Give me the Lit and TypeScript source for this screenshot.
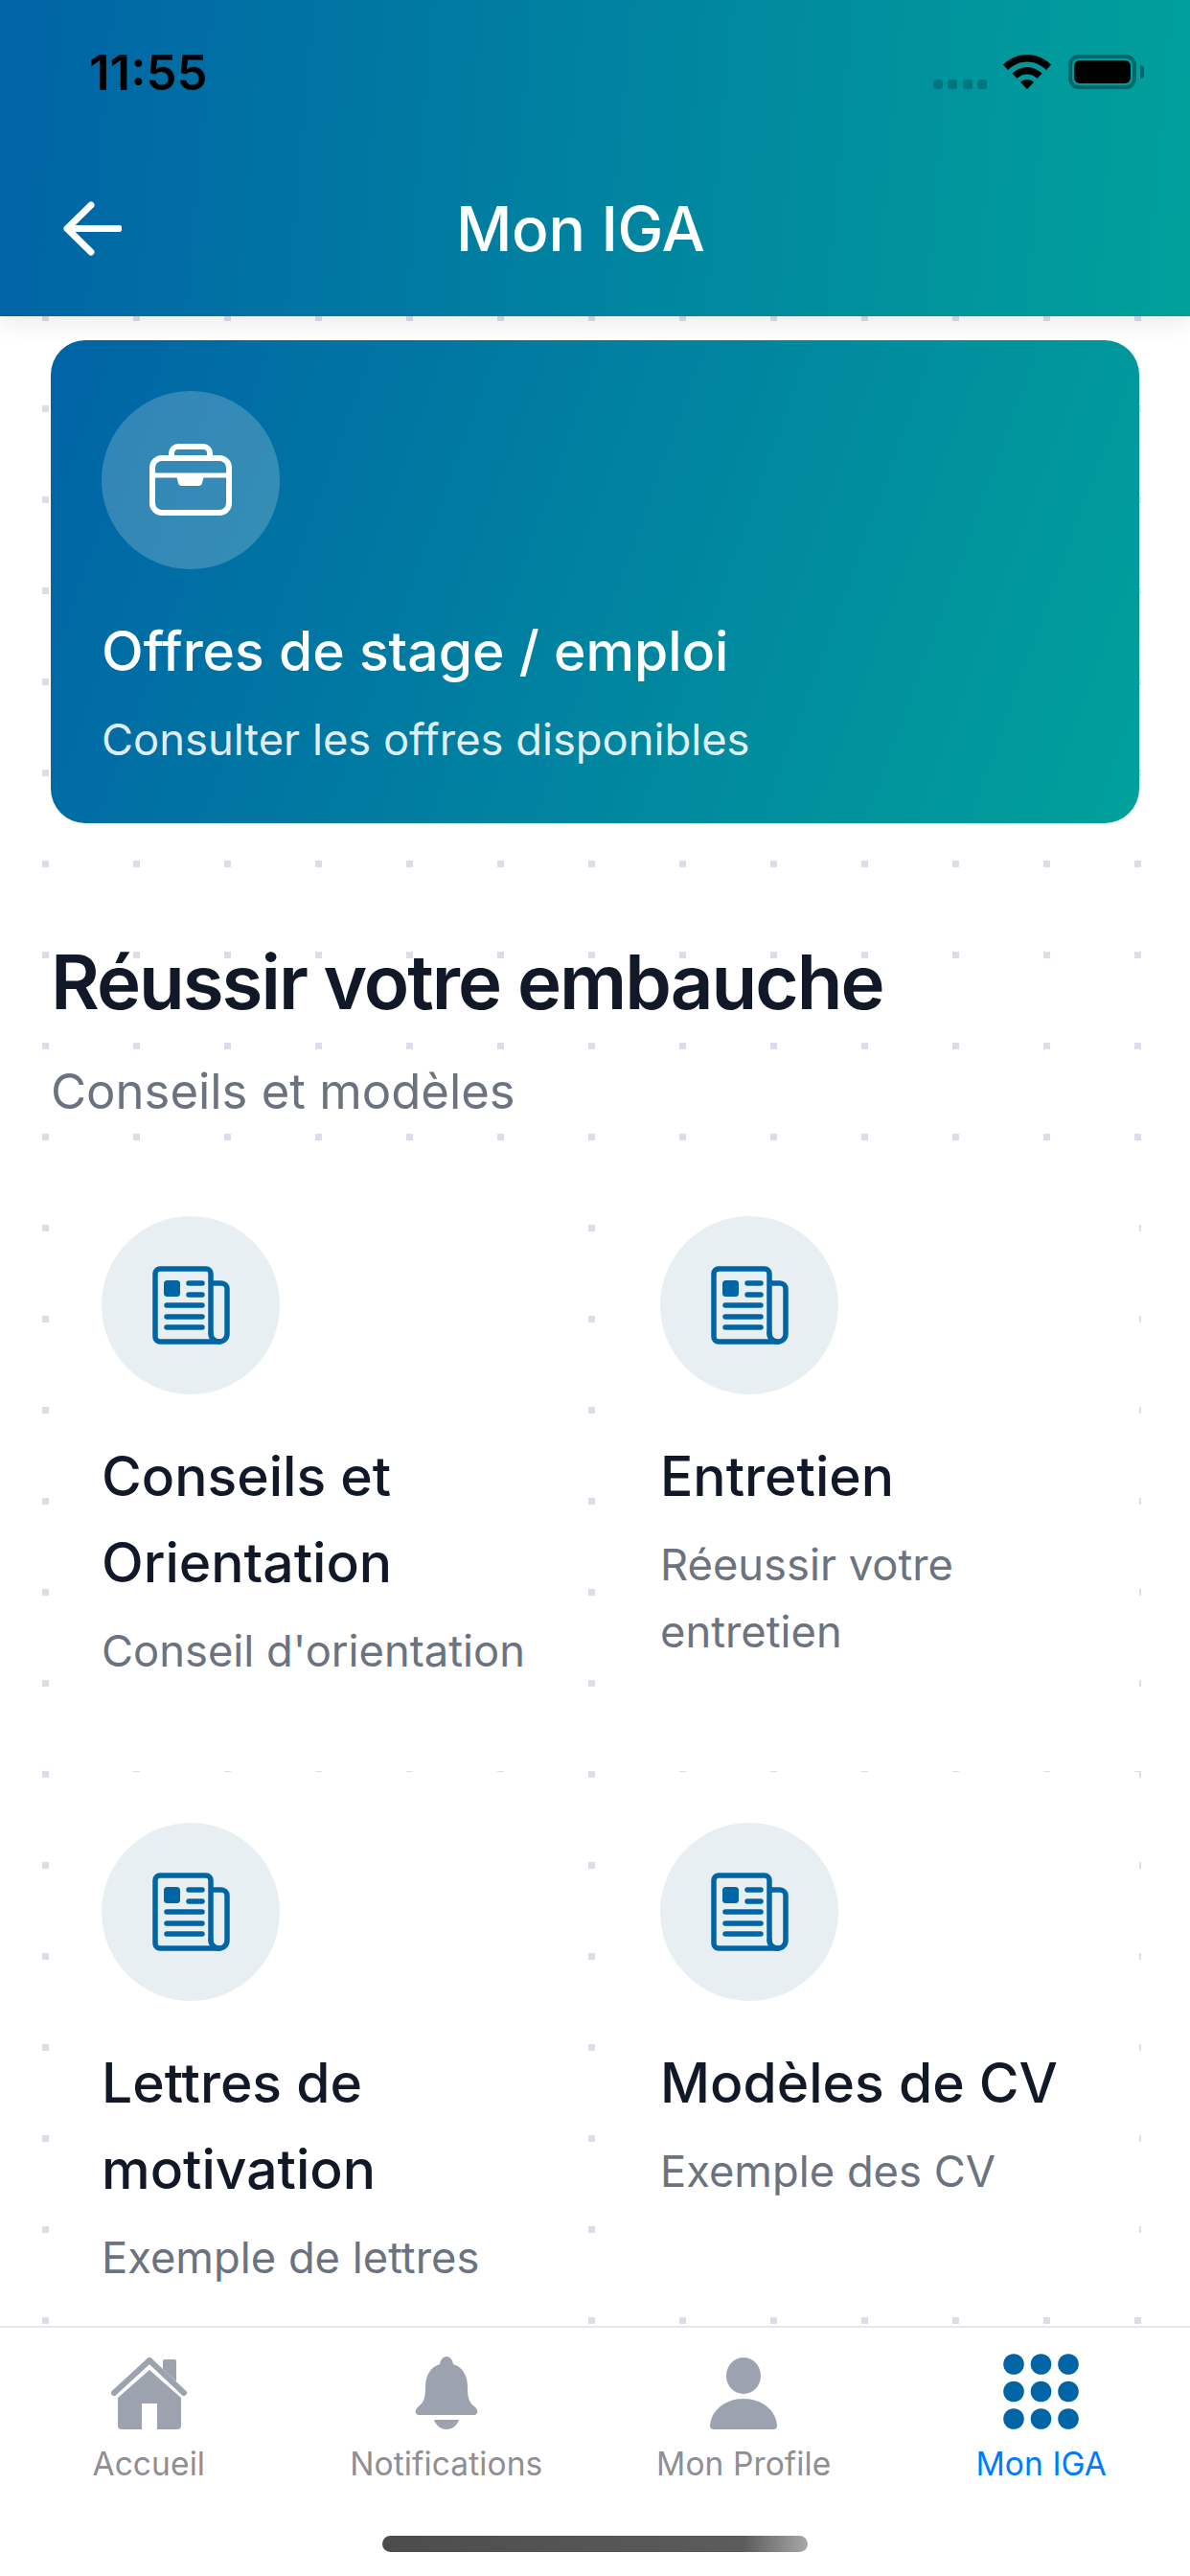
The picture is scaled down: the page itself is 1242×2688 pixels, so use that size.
import { LitElement, html, css, svg } from "lit";
import { customElement } from "lit/decorators.js";

const newspaper = html`<svg class="ico-news" viewBox="0 0 81 82" fill="none" stroke="#0065a5" stroke-width="5.5" stroke-linecap="round" stroke-linejoin="round">
  <path d="M61 70V8a5 5 0 0 0-5-5H8a5 5 0 0 0-5 5v66a5 5 0 0 0 5 5h62a8 8 0 0 0 8-8V24a6 6 0 0 0-6-6H61"/>
  <path d="M61 70a8.5 8.5 0 0 0 9 9"/>
  <rect x="12" y="15" width="17" height="17" rx="3.5" fill="#0065a5" stroke="none"/>
  <path d="M38 18h14M38 30h14M15 41h37M15 53h37M15 64h37"/>
</svg>`;

const briefcase = html`<svg class="ico-case" viewBox="-1 0 100 86" fill="none" stroke="#fff" stroke-width="6" stroke-linejoin="round">
  <rect x="9" y="20" width="80" height="57" rx="10"/>
  <path d="M29 20v-5a7 7 0 0 1 7-7h26a7 7 0 0 1 7 7v5"/>
  <path d="M9 38h80" stroke-width="5"/>
  <path d="M34 38h29l-2 8a4 4 0 0 1-4 3H40a4 4 0 0 1-4-3z" fill="#fff" stroke="none"/>
</svg>`;

const homeIcon = html`<svg class="t-home" viewBox="0 0 81 76" fill="#9ca3af">
  <path d="M4 38 41 4l36 34" fill="none" stroke="#9ca3af" stroke-width="6" stroke-linecap="round" stroke-linejoin="round"/>
  <path d="M55 5a2 2 0 0 1 2-2h10a2 2 0 0 1 2 2v21L55 13z"/>
  <path d="M41 14 74 43v29a4 4 0 0 1-4 4H49V49H33v27H12a4 4 0 0 1-4-4V43z"/>
</svg>`;
const bellIcon = html`<svg class="t-bell" viewBox="0 0 66 76" fill="#9ca3af">
  <path d="M33 0c4 0 6.500 4 7 8 10 3 15 12 15 24 0 12 2 16 7 20 3 2.500 4 5 3 7-.7 1.400-2 2-4 2H5c-2 0-3.300-.6-4-2-1-2 0-4.500 3-7 5-4 7-8 7-20 0-12 5-21 15-24 .5-4 3-8 7-8z"/>
  <path d="M20 66h26c-2 6-7 10-13 10s-11-4-13-10z"/>
</svg>`;
const userIcon = html`<svg class="t-user" viewBox="0 0 70 75" fill="#9ca3af">
  <ellipse cx="35" cy="19" rx="18" ry="19"/>
  <path d="M4 75a4 4 0 0 1-4-4C1 55 16 43 35 43s34 12 35 28a4 4 0 0 1-4 4z"/>
</svg>`;
const gridIcon = html`<svg class="t-grid" viewBox="0 0 79 79" fill="#0065a5">
  ${[11, 39.5, 68].map((y) => [11, 39.5, 68].map((x) => svg`<circle cx=${x} cy=${y} r="10.8"/>`))}
</svg>`;

const items = [
  [
    { t: "Conseils et Orientation", s: "Conseil d'orientation" },
    { t: "Entretien", s: "Réeussir votre entretien" },
  ],
  [
    { t: "Lettres de motivation", s: "Exemple de lettres" },
    { t: "Modèles de CV", s: "Exemple des CV" },
  ],
];

const tabs = [
  { label: "Accueil", icon: homeIcon, active: false },
  { label: "Notifications", icon: bellIcon, active: false },
  { label: "Mon Profile", icon: userIcon, active: false },
  { label: "Mon IGA", icon: gridIcon, active: true },
];

@customElement("app-root")
export class AppRoot extends LitElement {
  static styles = css`
    :host {
      display: flex;
      flex-direction: column;
      width: 1242px;
      height: 2688px;
      overflow: hidden;
      background: #fff;
      font-family: Inter, "Noto Sans", sans-serif;
      color: #111827;
    }
    .header {
      position: relative;
      z-index: 2;
      flex: none;
      height: 330px;
      background: linear-gradient(95deg, #0064a6, #00a19b);
      box-shadow: 0 6px 24px rgba(0, 0, 0, 0.09);
    }
    .status {
      height: 150px;
      display: flex;
      align-items: center;
      padding-left: 93px;
    }
    .time {
      font-size: 51px;
      font-weight: 600;
      color: #000;
    }
    .status-right {
      margin-left: auto;
      margin-right: 48px;
      display: flex;
      align-items: flex-end;
      height: 36px;
    }
    .signal {
      display: flex;
      gap: 5.3px;
      margin-right: 17px;
    }
    .signal i {
      width: 10px;
      height: 10px;
      border-radius: 3px;
      background: rgba(0, 50, 60, 0.3);
    }
    .wifi {
      width: 50px;
      height: 36px;
      margin-right: 18px;
    }
    .battery {
      width: 71px;
      height: 36px;
      box-sizing: border-box;
      border: 4px solid rgba(0, 40, 50, 0.45);
      border-radius: 11px;
      padding: 2px;
      display: flex;
    }
    .battery b {
      flex: 1;
      background: #000;
      border-radius: 6px;
    }
    .nub {
      width: 4px;
      height: 14px;
      margin: 0 0 11px 4px;
      background: rgba(0, 40, 50, 0.45);
      border-radius: 0 4px 4px 0;
    }
    .nav {
      height: 176px;
      display: flex;
      align-items: center;
      padding-left: 66px;
    }
    .back {
      width: 61px;
      height: 57px;
    }
    .title {
      margin-left: 349px;
      font-size: 64px;
      font-weight: 500;
      color: #fff;
      letter-spacing: -0.3px;
    }
    .main {
      flex: 1;
      min-height: 0;
      overflow: hidden;
      box-sizing: border-box;
      padding: 25px 53px 0;
      background-image: conic-gradient(from 270deg at 7px 7px, #dcdde8 0 90deg, transparent 0);
      background-size: 95px 95px;
      background-position: 44px -2px;
    }
    .card {
      box-sizing: border-box;
      padding: 53px 53px 52px;
      background: #fff;
    }
    .hero {
      background: linear-gradient(110deg, #0064a6, #00a19b);
      border-radius: 36px;
    }
    .circle {
      width: 186px;
      height: 186px;
      border-radius: 50%;
      background: #e8eff3;
      display: flex;
      align-items: center;
      justify-content: center;
    }
    .hero .circle {
      background: rgba(255, 255, 255, 0.2);
    }
    .ico-news {
      width: 81px;
      height: 82px;
    }
    .ico-case {
      width: 100px;
      height: 86px;
    }
    .card-title {
      margin-top: 41px;
      font-size: 57px;
      line-height: 90px;
      font-weight: 500;
      color: #111827;
    }
    .card-sub {
      margin-top: 12px;
      font-size: 45.3px;
      line-height: 70px;
      color: #6b7280;
    }
    .hero .card-title {
      color: #fff;
    }
    .hero .card-sub {
      color: rgba(255, 255, 255, 0.9);
    }
    h2 {
      margin: 119px 0 0;
      font-size: 78px;
      line-height: 94px;
      font-weight: 600;
      letter-spacing: -2px;
      color: #111827;
    }
    .lead {
      margin-top: 38px;
      font-size: 50.8px;
      line-height: 58px;
      color: #6b7280;
    }
    .grid {
      margin-top: 48px;
      display: flex;
      flex-direction: column;
      gap: 39px;
    }
    .row {
      display: grid;
      grid-template-columns: 1fr 1fr;
      column-gap: 30px;
      align-items: start;
    }
    .tabbar {
      flex: none;
      position: relative;
      z-index: 2;
      height: 261px;
      box-sizing: border-box;
      border-top: 2px solid #e5e7eb;
      background: #fff;
      display: flex;
      flex-direction: column;
    }
    .tabs {
      display: grid;
      grid-template-columns: repeat(4, 1fr);
    }
    .tab {
      display: flex;
      flex-direction: column;
      align-items: center;
      height: 217px;
    }
    .tab-ico {
      height: 80px;
      margin-top: 26px;
      display: flex;
      align-items: flex-end;
    }
    .tab-ico svg {
      display: block;
    }
    .t-home { width: 81px; height: 76px; }
    .t-bell { width: 66px; height: 76px; }
    .t-user { width: 70px; height: 75px; }
    .t-grid { width: 79px; height: 79px; }
    .tab span {
      margin-top: 16px;
      font-size: 33.5px;
      line-height: 40px;
      letter-spacing: 0.1px;
      color: #8e8e93;
    }
    .tab.on span {
      color: #007aff;
    }
    .home-bar {
      width: 444px;
      height: 17px;
      margin: 0 auto;
      border-radius: 9px;
      background: linear-gradient(90deg, #4c4c4c, #5c5c5c 85%, #a8a8a8);
    }
  `;

  private card(t: string, s: string, icon: unknown, hero = false) {
    return html`<div class="card ${hero ? "hero" : ""}">
      <div class="circle">${icon}</div>
      <div class="card-title">${t}</div>
      <div class="card-sub">${s}</div>
    </div>`;
  }

  render() {
    return html`
      <header class="header">
        <div class="status">
          <span class="time">11:55</span>
          <div class="status-right">
            <div class="signal"><i></i><i></i><i></i><i></i></div>
            <svg class="wifi" viewBox="0 0 50 36">
              <path d="M25 0c9.500 0 18 3.800 25 10.500l-5 5.500C39 10.500 32.500 7.500 25 7.500S11 10.500 5 16L0 10.500C7 3.800 15.500 0 25 0z"/>
              <path d="M25 13c6 0 11 2.300 15.500 6.500l-5 5.300C32.500 22 29 20.500 25 20.500s-7.500 1.500-10.500 4.300l-5-5.300C14 15.300 19 13 25 13z"/>
              <path d="M25 26c2.800 0 5 1 7 2.800L25 36l-7-7.200c2-1.800 4.200-2.800 7-2.800z"/>
            </svg>
            <div class="battery"><b></b></div>
            <div class="nub"></div>
          </div>
        </div>
        <div class="nav">
          <svg class="back" viewBox="0 0 61 57" fill="none" stroke="#fff" stroke-width="7" stroke-linecap="round" stroke-linejoin="round">
            <path d="M4 28.500h54M29 4 4 28.500 29 53"/>
          </svg>
          <div class="title">Mon IGA</div>
        </div>
      </header>
      <main class="main">
        ${this.card("Offres de stage / emploi", "Consulter les offres disponibles", briefcase, true)}
        <h2>Réussir votre embauche</h2>
        <div class="lead">Conseils et modèles</div>
        <div class="grid">
          ${items.map(
            (row) => html`<div class="row">${row.map((i) => this.card(i.t, i.s, newspaper))}</div>`
          )}
        </div>
      </main>
      <footer class="tabbar">
        <div class="tabs">
          ${tabs.map(
            (t) => html`<div class="tab ${t.active ? "on" : ""}">
              <div class="tab-ico">${t.icon}</div>
              <span>${t.label}</span>
            </div>`
          )}
        </div>
        <div class="home-bar"></div>
      </footer>
    `;
  }
}
